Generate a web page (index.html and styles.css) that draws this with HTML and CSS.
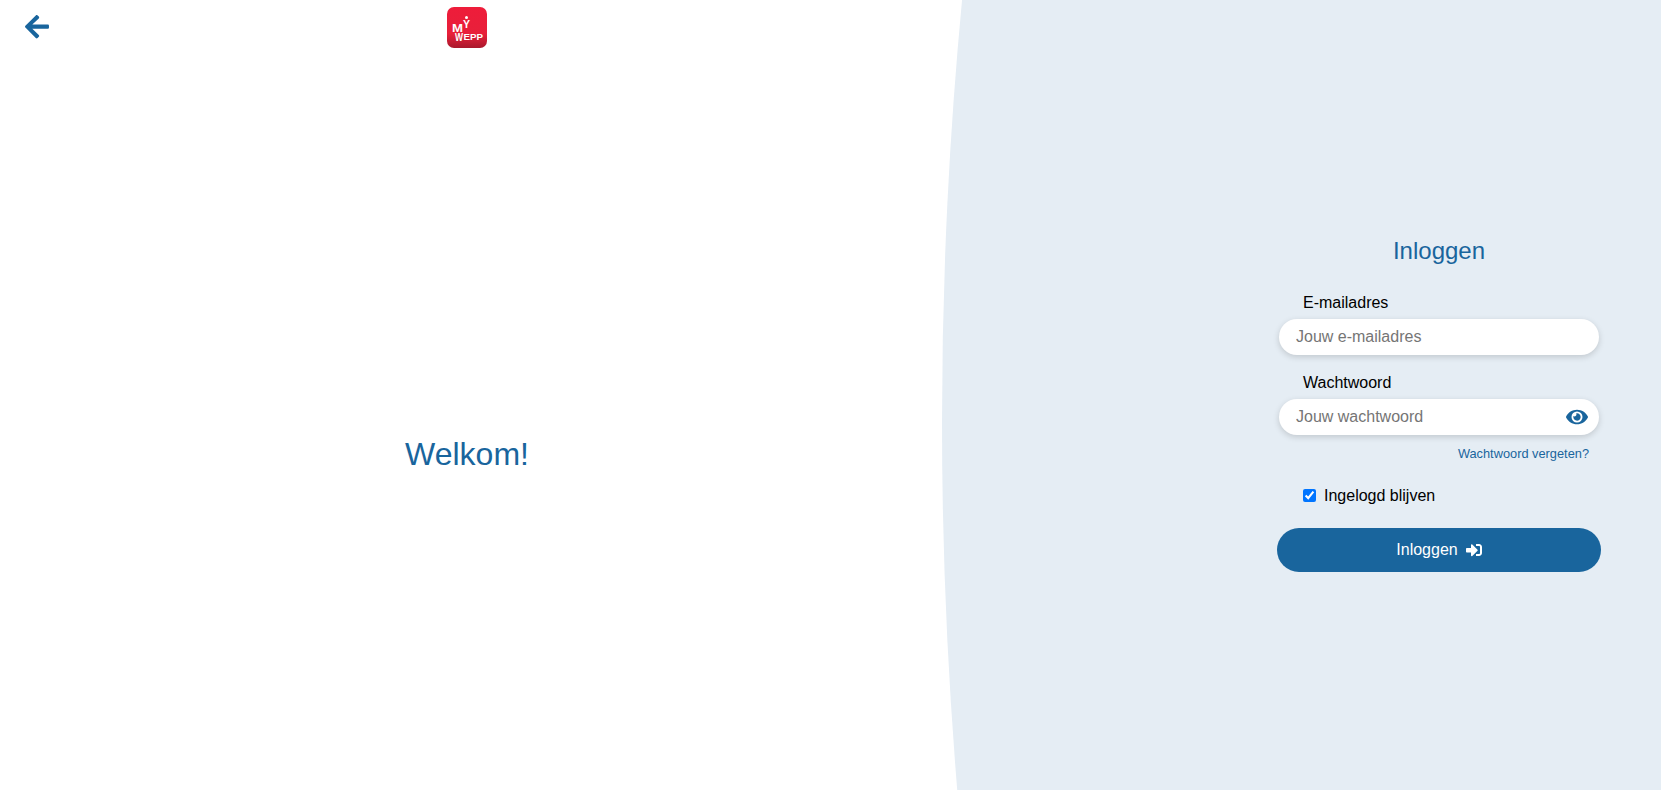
FILE: index.html
```html
<!DOCTYPE html>
<html lang="nl">
<head>
  <meta charset="UTF-8" />
  <meta name="viewport" content="width=device-width, initial-scale=1.0" />
  <title>MyWepp - Inloggen</title>
  <link rel="stylesheet" href="styles.css">
</head>
<body>
  <div class="page">
    <section class="intro">
      <header class="topbar">
        <a class="back" href="#" aria-label="Terug">
          <svg viewBox="0 0 448 512" width="24" height="27.4" fill="currentColor"><path d="M257.5 445.1l-22.2 22.2c-9.4 9.4-24.6 9.4-33.9 0L7 273c-9.4-9.4-9.4-24.6 0-33.9L201.4 44.7c9.4-9.4 24.6-9.4 33.9 0l22.2 22.2c9.5 9.5 9.3 25-.4 34.3L136.6 216H424c13.3 0 24 10.7 24 24v32c0 13.3-10.7 24-24 24H136.6l120.5 114.8c9.8 9.3 10 24.8.4 34.3z"/></svg>
        </a>
        <svg class="logo" viewBox="0 0 40 41" width="40" height="41">
          <defs>
            <linearGradient id="logoRed" x1="0" y1="0" x2="0" y2="1">
              <stop offset="0" stop-color="#ee1c3a"/>
              <stop offset="0.65" stop-color="#e8203a"/>
              <stop offset="1" stop-color="#a9182c"/>
            </linearGradient>
          </defs>
          <rect width="40" height="41" rx="7" fill="url(#logoRed)"/>
          <circle cx="19.5" cy="10.5" r="1.5" fill="#fff"/>
          <text class="logo-text"><tspan class="logo-m" x="5" y="24.5" textLength="11" lengthAdjust="spacingAndGlyphs">M</tspan><tspan class="logo-y" x="16" y="21" textLength="7" lengthAdjust="spacingAndGlyphs">Y</tspan><tspan class="logo-w" x="8" y="34" textLength="8" lengthAdjust="spacingAndGlyphs">W</tspan><tspan class="logo-epp" x="16.5" y="33" textLength="19.5" lengthAdjust="spacingAndGlyphs">EPP</tspan></text>
        </svg>
      </header>
      <h1 class="welcome">Welkom!</h1>
    </section>

    <section class="panel">
      <form class="login">
        <h2 class="login-title">Inloggen</h2>

        <div class="field">
          <label for="email">E-mailadres</label>
          <div class="input-wrap">
            <input id="email" type="text" placeholder="Jouw e-mailadres" />
          </div>
        </div>

        <div class="field field-password">
          <label for="password">Wachtwoord</label>
          <div class="input-wrap">
            <input id="password" type="password" placeholder="Jouw wachtwoord" />
            <svg class="eye" viewBox="0 0 576 512" width="22" height="20" fill="currentColor"><path d="M572.52 241.4C518.29 135.59 410.93 64 288 64S57.68 135.64 3.48 241.41a32.35 32.35 0 0 0 0 29.19C57.71 376.41 165.07 448 288 448s230.32-71.64 284.52-177.41a32.35 32.35 0 0 0 0-29.19zM288 400a144 144 0 1 1 144-144 143.93 143.93 0 0 1-144 144zm0-240a95.31 95.31 0 0 0-25.31 3.79 47.85 47.85 0 0 1-66.9 66.9A95.78 95.78 0 1 0 288 160z"/></svg>
          </div>
        </div>

        <a class="forgot" href="#">Wachtwoord vergeten?</a>

        <label class="remember">
          <input type="checkbox" checked />
          <span>Ingelogd blijven</span>
        </label>

        <button class="submit" type="button">
          Inloggen
          <svg viewBox="0 0 512 512" width="16" height="16" fill="currentColor"><path d="M416 448h-84c-6.6 0-12-5.4-12-12v-40c0-6.6 5.4-12 12-12h84c17.7 0 32-14.3 32-32V160c0-17.7-14.3-32-32-32h-84c-6.6 0-12-5.4-12-12V76c0-6.6 5.4-12 12-12h84c53 0 96 43 96 96v192c0 53-43 96-96 96zm-47-201L201 79c-15-15-41-4.5-41 17v96H24c-13.3 0-24 10.7-24 24v96c0 13.3 10.7 24 24 24h136v96c0 21.5 26 32 41 17l168-168c9.3-9.4 9.3-24.6 0-34z"/></svg>
        </button>
      </form>
    </section>
  </div>
</body>
</html>
```

FILE: styles.css
```css
:root {
  --blue: #19659d;
  --panel: #e5edf4;
}
* {
  box-sizing: border-box;
}
html,
body {
  height: 100%;
}
body {
  margin: 0;
  font-family: 'Liberation Sans', Arial, sans-serif;
  font-size: 16px;
  color: #000;
  background: #fff;
  overflow: hidden;
}
.page {
  display: flex;
  height: 790px;
}
.intro {
  flex: 0 0 934px;
  display: flex;
  flex-direction: column;
}
.topbar {
  display: grid;
  grid-template-columns: 1fr auto 1fr;
  align-items: start;
  padding-top: 7px;
  height: 54px;
}
.back {
  color: var(--blue);
  display: block;
  margin: 6px 0 0 25px;
  line-height: 0;
}
.logo {
  grid-column: 2;
  display: block;
}
.logo-text {
  fill: #fff;
  font-family: 'Liberation Sans', Arial, sans-serif;
  font-weight: bold;
}
.logo-m {
  font-size: 11.5px;
}
.logo-y {
  font-size: 10px;
}
.logo-w {
  font-size: 10px;
}
.logo-epp {
  font-size: 9.5px;
}
.welcome {
  margin: 382px 0 0;
  text-align: center;
  font-size: 32px;
  line-height: 36px;
  font-weight: normal;
  color: var(--blue);
}
.panel {
  flex: 1;
  display: flex;
  justify-content: flex-end;
  padding: 237px 60px 0 0;
  background: var(--panel);
  clip-path: circle(4450px at 4458px 422px);
}
.login {
  width: 324px;
  display: flex;
  flex-direction: column;
}
.login-title {
  margin: 0 0 29px;
  text-align: center;
  font-size: 24px;
  line-height: 28px;
  font-weight: normal;
  color: var(--blue);
}
.field {
  padding: 0 2px;
  margin-bottom: 19px;
}
.field-password {
  margin-bottom: 11px;
}
.field label {
  display: block;
  margin: 0 0 7px 24px;
  line-height: 18px;
}
.input-wrap {
  display: flex;
  align-items: center;
  height: 36px;
  padding: 0 11px 0 17px;
  background: #fff;
  border-radius: 18px;
  box-shadow: 0 2px 6px rgba(0, 0, 0, 0.16);
}
.input-wrap input {
  flex: 1;
  min-width: 0;
  border: none;
  outline: none;
  padding: 0;
  background: none;
  font: inherit;
}
.input-wrap input::placeholder {
  color: #757575;
}
.eye {
  color: var(--blue);
  flex: none;
}
.forgot {
  align-self: flex-end;
  margin-right: 12px;
  font-size: 12.8px;
  line-height: 16px;
  color: var(--blue);
  text-decoration: none;
}
.remember {
  display: flex;
  align-items: center;
  margin: 25px 0 0 26px;
  line-height: 18px;
}
.remember input {
  width: 13px;
  height: 13px;
  margin: 0 8px 0 0;
  position: relative;
  top: -1px;
}
.submit {
  display: flex;
  align-items: center;
  justify-content: center;
  gap: 8px;
  height: 44px;
  margin-top: 23px;
  border: none;
  border-radius: 22px;
  background: var(--blue);
  color: #fff;
  font: inherit;
  cursor: pointer;
}
```
